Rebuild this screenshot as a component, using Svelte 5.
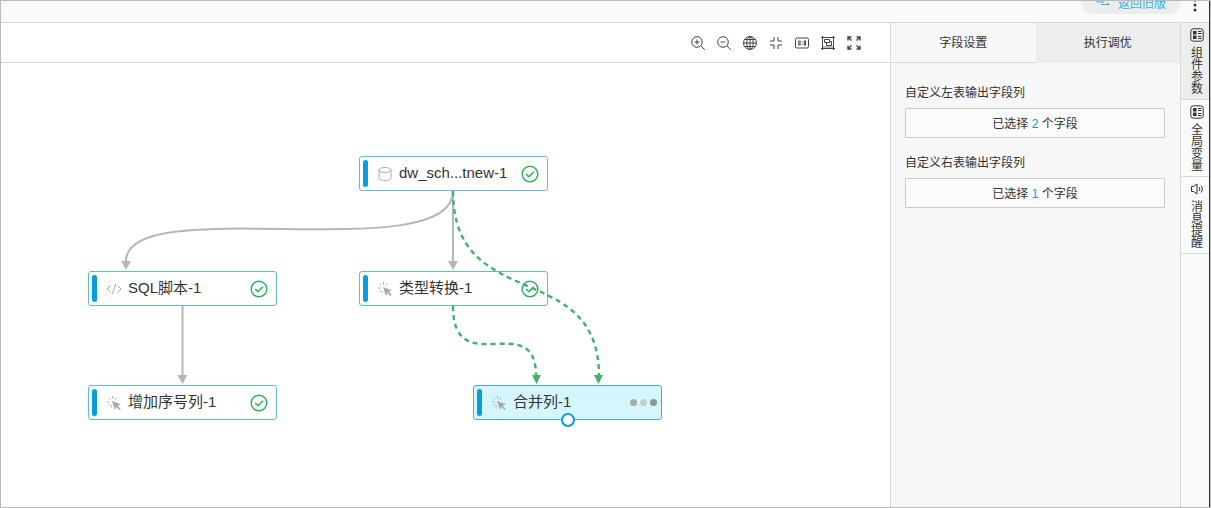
<script lang="ts">
	type Node = {
		id: string;
		label: string;
		icon: 'table' | 'code' | 'click';
		x: number;
		y: number;
		running?: boolean;
	};

	const nodes: Node[] = [
		{ id: 'source', label: 'dw_sch...tnew-1', icon: 'table', x: 358, y: 93 },
		{ id: 'sql', label: 'SQL脚本-1', icon: 'code', x: 87, y: 208 },
		{ id: 'cast', label: '类型转换-1', icon: 'click', x: 358, y: 208 },
		{ id: 'index', label: '增加序号列-1', icon: 'click', x: 87, y: 322 },
		{ id: 'merge', label: '合并列-1', icon: 'click', x: 472, y: 322, running: true }
	];

	const tools = ['放大', '缩小', '全局', '居中', '原始比例', '框选', '全屏'];

	const panelTabs = ['字段设置', '执行调优'];
	let activeTab = $state(0);

	const fields = [
		{ id: 'left-fields', label: '自定义左表输出字段列', count: 2 },
		{ id: 'right-fields', label: '自定义右表输出字段列', count: 1 }
	];

	const railTabs = [
		{ label: '组件参数', icon: 'grid' },
		{ label: '全局变量', icon: 'grid' },
		{ label: '消息提醒', icon: 'sound' }
	];
	let activeRail = $state(0);
	let selected = $state('merge');
</script>

<div class="app">
	<header>
		<button class="back">
			<svg width="14" height="12" viewBox="0 0 14 12"><path d="M1 3v3h7M5 8.500h8M11 6.500l2 2" /></svg>
			返回旧版
		</button>
		<button class="more" aria-label="更多">
			<svg width="4" height="16" viewBox="0 0 4 16">
				<circle cx="2" cy="3" r="1.5" /><circle cx="2" cy="8" r="1.5" /><circle cx="2" cy="13" r="1.5" />
			</svg>
		</button>
	</header>

	<div class="body">
		<main>
			<div class="toolbar">
				{#each tools as tool, i}
					<button aria-label={tool}>
						<svg width="16" height="16" viewBox="0 0 16 16">
							{#if i < 2}
								<circle cx="7" cy="7" r="5.3" />
								<path d="M11 11l3.8 3.8M4.5 7h5" />
								{#if i === 0}<path d="M7 4.5v5" />{/if}
							{:else if i === 2}
								<circle cx="8" cy="8" r="6.5" />
								<ellipse cx="8" cy="8" rx="3.2" ry="6.5" />
								<path d="M8 1.5v13M1.5 8h13M2.6 4.5h10.8M2.6 11.5h10.8" />
							{:else if i === 3}
								<path d="M6 2v4H2M10 2v4h4M6 14v-4H2M10 14v-4h4" />
							{:else if i === 4}
								<rect x="1.5" y="3" width="13" height="10" rx="1.5" />
								<path d="M4.8 5.5v5M6 5.5v5M10.3 5.5v5M11.500 5.5v5M8 6.3v1M8 9v1" />
							{:else if i === 5}
								<path class="shade" d="M3 11h10v2H3z" />
								<path d="M2.5 1v14M13.5 1v14M1 2.5h14M1 13.5h14M4.500 4.500h5v3h-5zM6.500 7.500v3h5v-4h-2" />
							{:else}
								<path class="bold" d="M2 5.5V2h3.5M2 2l3.500 3.500M10.5 2H14v3.5M14 2l-3.500 3.500M2 10.5V14h3.5M2 14l3.500-3.500M14 10.5V14h-3.5M14 14l-3.500-3.500" />
							{/if}
						</svg>
					</button>
				{/each}
			</div>

			<div class="canvas">
				{#each nodes as node (node.id)}
					<button
						class="node"
						class:selected={selected === node.id}
						style="left: {node.x}px; top: {node.y}px"
						onclick={() => (selected = node.id)}
					>
						<span class="bar"></span>
						<svg class="kind" width="16" height="16" viewBox="0 0 16 16">
							{#if node.icon === 'table'}
								<ellipse cx="8" cy="4" rx="6" ry="2.5" />
								<path d="M2 4v8c0 1.4 2.7 2.5 6 2.5s6-1.1 6-2.5V4" />
							{:else if node.icon === 'code'}
								<path d="M4.5 4.5L1 8l3.5 3.5M11.5 4.5L15 8l-3.5 3.5M9.7 3L6.3 13" />
							{:else}
								<path d="M6.5 1v2.5M2.5 2.7l1.8 1.8M10.5 2.7L8.7 4.5M1 7h2.5M2.5 11l1.8-1.8M5.500 10.500L5 12.500" />
								<path class="fill" d="M6 6l9 3.3-3.4 1.4 3.2 3.2-1.2 1.2-3.2-3.2L9 15z" />
							{/if}
						</svg>
						<span class="label">{node.label}</span>
						{#if node.running}
							<span class="dots"><i></i><i></i><i></i></span>
							<span class="port"></span>
						{:else}
							<svg class="check" width="18" height="18" viewBox="0 0 18 18">
								<circle cx="9" cy="9" r="7.8" />
								<path d="M5.2 9l2.8 2.8 5-5" />
							</svg>
						{/if}
					</button>
				{/each}

				<svg class="edges" width="700" height="360" viewBox="0 0 700 360">
					<g class="idle">
						<path d="M452 128C452 206 125 128 125 198" />
						<path d="M452 128V199" />
						<path d="M181.500 242V313" />
						<path class="head" d="M120 198h10l-5 9zM447 198h10l-5 9zM176.500 312h10l-5 9z" />
					</g>
					<g class="flowing">
						<path d="M452 128C452 252 598 194 598 313" />
						<path d="M452 243C452 320 535 244 535 313" />
						<path class="head" d="M531 312h9l-4.5 9zM593 312h9l-4.5 9z" />
					</g>
				</svg>
			</div>
		</main>

		<aside>
			<div class="tabs">
				{#each panelTabs as tab, i}
					<button class:active={activeTab === i} onclick={() => (activeTab = i)}>{tab}</button>
				{/each}
			</div>
			<div class="form">
				{#each fields as field (field.id)}
					<div class="field">
						<label for={field.id}>{field.label}</label>
						<button id={field.id}>已选择 <em>{field.count}</em> 个字段</button>
					</div>
				{/each}
			</div>
		</aside>

		<nav>
			{#each railTabs as tab, i}
				<button class:active={activeRail === i} onclick={() => (activeRail = i)}>
					<svg width="14" height="14" viewBox="0 0 14 14">
						{#if tab.icon === 'grid'}
							<rect x="0.8" y="0.8" width="12.4" height="12.4" rx="2.5" />
							<path class="fill" d="M3 3h3.5v3.500H3zM3 7.500h3.5V11H3z" />
							<path d="M8 3.500h3.5M8 5.500h3.5M8 8.5h3.5M8 10.5h3.5" />
						{:else}
							<path d="M1.5 4.5h2L7 2v10L3.5 9.5h-2zM9 5c1 1 1 3 0 4M11 3.5c1.8 2 1.8 5 0 7" />
						{/if}
					</svg>
					<span>{tab.label}</span>
				</button>
			{/each}
		</nav>
	</div>
</div>

<style>
	:global(body) {
		background: #fff;
	}

	.app {
		box-sizing: border-box;
		min-height: 100vh;
		display: flex;
		flex-direction: column;
		border: 1px solid #bbb;
		box-shadow: inset -1px 0 #333;
		padding-right: 1px;
		font-family: 'Liberation Sans', 'Noto Sans CJK SC', sans-serif;
		font-size: 12px;
		color: #333;
	}

	button {
		margin: 0;
		padding: 0;
		border: 0;
		background: none;
		font: inherit;
		color: inherit;
		cursor: pointer;
	}

	svg {
		display: block;
		flex: none;
		fill: none;
		stroke: currentColor;
	}

	header {
		box-sizing: border-box;
		height: 22px;
		display: flex;
		align-items: flex-end;
		justify-content: flex-end;
		gap: 12px;
		padding: 0 12px 8px 0;
		overflow: hidden;
		background: #fafafa;
		border-bottom: 1px solid #d9d9d9;
	}

	.back {
		display: flex;
		align-items: center;
		justify-content: center;
		gap: 8px;
		flex: none;
		width: 100px;
		height: 24px;
		border-radius: 12px;
		background: #eceeee;
		color: #35ace0;
	}

	.more {
		padding-bottom: 1px;
	}

	.more svg {
		fill: #333;
		stroke: none;
	}

	.body {
		flex: 1;
		display: flex;
	}

	main {
		flex: 1;
		min-width: 0;
		display: flex;
		flex-direction: column;
	}

	.toolbar {
		height: 39px;
		display: flex;
		align-items: center;
		justify-content: flex-end;
		gap: 10px;
		padding-right: 28px;
		border-bottom: 1px solid #d9d9d9;
		color: #444;
	}

	.toolbar .bold {
		stroke-width: 1.4;
	}

	.toolbar .shade {
		fill: #bbb;
		stroke: none;
	}

	.canvas {
		position: relative;
		flex: 1;
		overflow: hidden;
	}

	.node {
		position: absolute;
		box-sizing: border-box;
		display: flex;
		align-items: center;
		width: 189px;
		height: 35px;
		padding: 0 8px 0 3px;
		border: 1px solid #5bbbe6;
		border-radius: 3px;
		background: #fff;
		font-size: 15px;
		line-height: 20px;
		text-align: left;
	}

	.node.selected {
		background: #d6f6fe;
		border-color: #4ba9d4;
	}

	.bar {
		width: 5px;
		height: 27px;
		border-radius: 3px;
		background: #069edb;
	}

	.kind {
		margin: 0 6px 0 9px;
		color: #aaa;
	}

	.kind .fill {
		fill: #aaa;
		stroke: none;
	}

	.label {
		flex: 1;
		padding-bottom: 2px;
		white-space: nowrap;
	}

	.check {
		color: #2bb25b;
		stroke-width: 1.5;
	}

	.dots {
		display: flex;
		gap: 3px;
		margin-right: -4px;
	}

	.dots i {
		width: 7px;
		height: 7px;
		border-radius: 50%;
		background: #aaa;
	}

	.dots i:nth-child(2) {
		background: #c3ced2;
	}

	.dots i:nth-child(3) {
		background: #8d9496;
	}

	.port {
		position: absolute;
		left: 50%;
		bottom: -8px;
		box-sizing: border-box;
		width: 14px;
		height: 14px;
		transform: translateX(-50%);
		border: 2px solid #069edb;
		border-radius: 50%;
		background: #fff;
	}

	.edges {
		position: absolute;
		inset: 0 auto auto 0;
		stroke-width: 2;
		pointer-events: none;
	}

	.idle {
		color: #b3b7b9;
	}

	.flowing {
		color: #42b06e;
		stroke-width: 2.4;
	}

	.flowing path {
		stroke-dasharray: 5 4;
	}

	.edges .head {
		fill: currentColor;
		stroke: none;
	}

	aside {
		width: 289px;
		border-left: 1px solid #d9d9d9;
		background: #f7f7f7;
	}

	.tabs {
		display: flex;
		height: 40px;
	}

	.tabs button {
		box-sizing: border-box;
		flex: 1;
		padding-bottom: 2px;
		border-bottom: 1px solid transparent;
		background: #eceeee;
	}

	.tabs button.active {
		border-bottom-color: #d9d9d9;
		background: #f7f7f7;
	}

	.form {
		display: flex;
		flex-direction: column;
		gap: 16px;
		padding: 21px 15px 0 14px;
	}

	.field {
		display: flex;
		flex-direction: column;
		gap: 6px;
	}

	.field label {
		line-height: 18px;
	}

	.field button {
		height: 30px;
		padding-bottom: 2px;
		border: 1px solid #c8cbcb;
		border-radius: 1px;
		background: #fbfbfb;
	}

	em {
		font-style: normal;
		color: #069edb;
	}

	nav {
		width: 28px;
		border-left: 1px solid #d9d9d9;
		background: #fafafa;
	}

	nav button {
		box-sizing: border-box;
		display: flex;
		flex-direction: column;
		align-items: center;
		gap: 5px;
		width: 100%;
		height: 77px;
		padding: 5px 0 0 4px;
		border-bottom: 1px solid #d9d9d9;
		line-height: 12px;
	}

	nav button.active {
		background: #eceeee;
	}

	nav span {
		width: 12px;
	}

	nav .fill {
		fill: currentColor;
		stroke: none;
	}
</style>
